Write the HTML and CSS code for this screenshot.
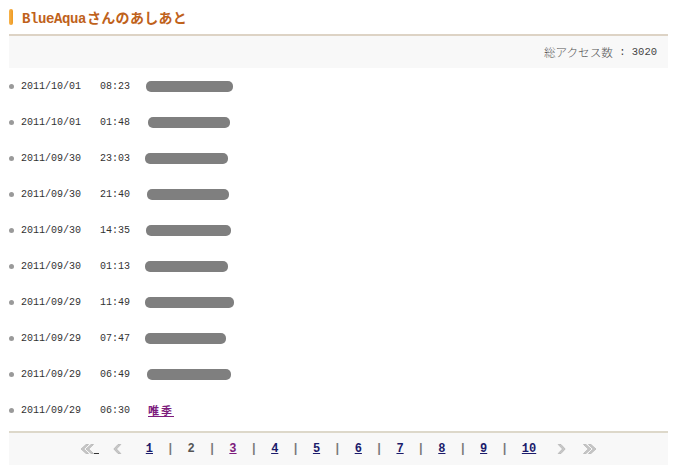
FILE: index.html
```html
<!DOCTYPE html>
<html lang="ja">
<head>
<meta charset="utf-8">
<title>BlueAquaさんのあしあと</title>
<link rel="stylesheet" href="styles.css">
</head>
<body>
<div class="box">
  <h2 class="title"><span class="mark"></span><span class="title-text"><span class="lat">BlueAqua</span><span class="kana">さんのあしあと</span></span></h2>
  <div class="count"><span class="jp">総アクセス数</span> : 3020</div>
  <ul class="list">
    <li><span class="dot"></span><span class="date">2011/10/01</span><span class="time">08:23</span><span class="blur" style="width:87px;margin-left:1px"></span></li>
    <li><span class="dot"></span><span class="date">2011/10/01</span><span class="time">01:48</span><span class="blur" style="width:82px;margin-left:3px"></span></li>
    <li><span class="dot"></span><span class="date">2011/09/30</span><span class="time">23:03</span><span class="blur" style="width:83px"></span></li>
    <li><span class="dot"></span><span class="date">2011/09/30</span><span class="time">21:40</span><span class="blur" style="width:82px;margin-left:2px"></span></li>
    <li><span class="dot"></span><span class="date">2011/09/30</span><span class="time">14:35</span><span class="blur" style="width:85px;margin-left:1px"></span></li>
    <li><span class="dot"></span><span class="date">2011/09/30</span><span class="time">01:13</span><span class="blur" style="width:83px"></span></li>
    <li><span class="dot"></span><span class="date">2011/09/29</span><span class="time">11:49</span><span class="blur" style="width:89px"></span></li>
    <li><span class="dot"></span><span class="date">2011/09/29</span><span class="time">07:47</span><span class="blur" style="width:81px"></span></li>
    <li><span class="dot"></span><span class="date">2011/09/29</span><span class="time">06:49</span><span class="blur" style="width:84px;margin-left:2px"></span></li>
    <li><span class="dot"></span><span class="date">2011/09/29</span><span class="time">06:30</span><a class="name" href="#">唯季</a></li>
  </ul>
  <div class="pager">
    <a class="arrow first" href="#"><svg width="14" height="10" viewBox="0 0 14 10"><path d="M6 0.5 L1 5 L6 9.5 L8.5 9.5 L3.8 5 L8.5 0.5 Z M11 0.5 L6 5 L11 9.5 L13.5 9.5 L8.8 5 L13.5 0.5 Z" fill="#c8c8c8" stroke="#a8a8a8" stroke-width="0.6"/></svg><span class="us"></span></a>
    <a class="arrow prev" href="#"><svg width="9" height="10" viewBox="0 0 9 10"><path d="M5 0.5 L0.8 5 L5 9.5 L7.8 9.5 L3.5 5 L7.8 0.5 Z" fill="#c8c8c8" stroke="#a8a8a8" stroke-width="0.6"/></svg></a>
    <a class="num" href="#">1</a><span class="sep">|</span>
    <span class="cur">2</span><span class="sep">|</span>
    <a class="num visited" href="#">3</a><span class="sep">|</span>
    <a class="num" href="#">4</a><span class="sep">|</span>
    <a class="num" href="#">5</a><span class="sep">|</span>
    <a class="num" href="#">6</a><span class="sep">|</span>
    <a class="num" href="#">7</a><span class="sep">|</span>
    <a class="num" href="#">8</a><span class="sep">|</span>
    <a class="num" href="#">9</a><span class="sep">|</span>
    <a class="num" href="#">10</a>
    <a class="arrow next" href="#"><svg width="9" height="10" viewBox="0 0 9 10"><path d="M4 0.5 L8.2 5 L4 9.5 L1.2 9.5 L5.5 5 L1.2 0.5 Z" fill="#c8c8c8" stroke="#a8a8a8" stroke-width="0.6"/></svg></a>
    <a class="arrow last" href="#"><svg width="14" height="10" viewBox="0 0 14 10"><path d="M3 0.5 L8 5 L3 9.5 L0.5 9.5 L5.2 5 L0.5 0.5 Z M8 0.5 L13 5 L8 9.5 L5.5 9.5 L10.2 5 L5.5 0.5 Z" fill="#c8c8c8" stroke="#a8a8a8" stroke-width="0.6"/></svg></a>
  </div>
</div>
</body>
</html>
```

FILE: styles.css
```css
html, body {
  margin: 0;
  padding: 0;
  background: #ffffff;
}
body {
  font-family: "Liberation Mono", "Noto Sans CJK JP", monospace;
  color: #333333;
}
.box {
  width: 659px;
  margin: 0 0 0 9px;
}
.title {
  margin: 0;
  display: flex;
  align-items: flex-start;
  border-bottom: 2px solid #ddd3c5;
  box-sizing: border-box;
  height: 36px;
}
.mark {
  width: 4px;
  height: 16px;
  margin-top: 9px;
  border-radius: 2px;
  background: linear-gradient(to right, #f7b24a, #ee9a22);
}
.title-text {
  margin-left: 9px;
  margin-top: 8px;
  font-weight: bold;
  line-height: 18px;
  color: #bf621b;
  white-space: nowrap;
}
.title-text .lat {
  font-family: "Liberation Mono", monospace;
  font-size: 14px;
  letter-spacing: -0.4px;
}
.title-text .kana {
  font-family: "Noto Sans CJK JP", sans-serif;
  font-size: 14px;
  letter-spacing: 0.3px;
  margin-left: 1px;
}
.count {
  height: 32px;
  background: #f8f8f8;
  display: flex;
  align-items: center;
  justify-content: flex-end;
  padding-right: 11px;
  font-size: 10.5px;
  color: #444444;
  white-space: pre;
}
.count .jp {
  font-family: "Noto Sans CJK JP", sans-serif;
  font-size: 11.6px;
  font-weight: 300;
  color: #555555;
}
.list {
  list-style: none;
  margin: 0;
  padding: 0;
}
.list li {
  height: 36px;
  display: flex;
  align-items: center;
}
.dot {
  width: 5px;
  height: 5px;
  border-radius: 50%;
  background: #9a9a9a;
  margin-top: 1px;
}
.date {
  margin-left: 7px;
  width: 79px;
  font-size: 10px;
  color: #333333;
}
.time {
  width: 45px;
  font-size: 10px;
  color: #333333;
}
.blur {
  display: block;
  height: 11px;
  border-radius: 5px;
  background: #7f7f7f;
  margin-top: 1px;
}
.name {
  margin-left: 3px;
  font-family: "Noto Sans CJK JP", sans-serif;
  font-size: 11px;
  font-weight: bold;
  letter-spacing: 2px;
  color: #7d1c7d;
  text-decoration: underline;
}
.pager {
  margin-top: 3px;
  border-top: 2px solid #ddd8ca;
  background: #f8f8f8;
  height: 32px;
  display: flex;
  align-items: center;
  justify-content: center;
  gap: 13.7px;
  font-size: 12px;
  font-weight: bold;
}
.pager a {
  text-decoration: underline;
}
.num {
  color: #1b1b6b;
}
.num.visited {
  color: #7d1c7d;
}
.cur {
  color: #555555;
}
.sep {
  color: #777777;
}
.arrow {
  display: flex;
  align-items: center;
}
.arrow.first {
  margin-right: 0;
}
.arrow.prev {
  margin-right: 10px;
}
.arrow.next {
  margin-left: 7px;
}
.arrow.last {
  margin-left: 3px;
}
.us {
  display: block;
  width: 5px;
  height: 1px;
  background: #333;
  margin-top: 9px;
}
```
